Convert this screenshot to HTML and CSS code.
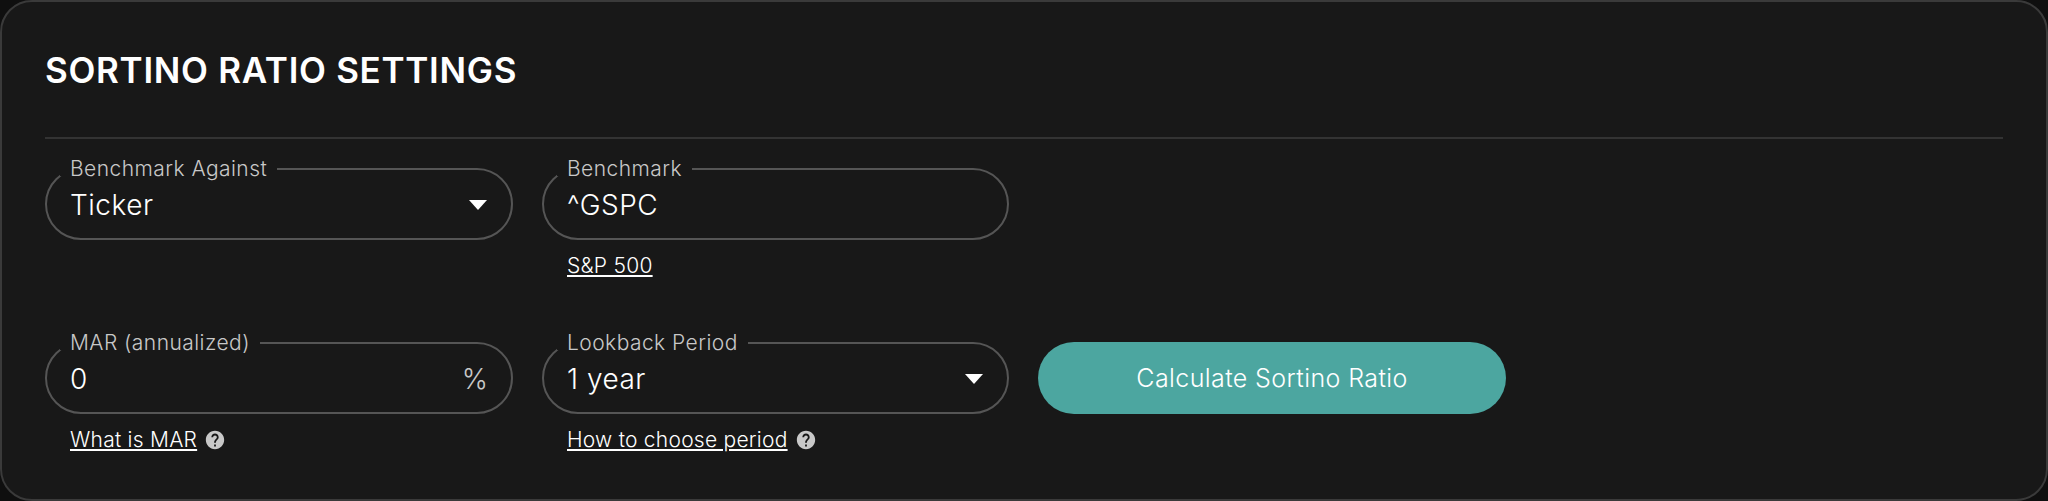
FILE: index.html
```html
<!DOCTYPE html>
<html lang="en">
<head>
    <meta charset="UTF-8">
    <meta name="viewport" content="width=device-width, initial-scale=1.0">
    <title>Sortino Ratio Settings</title>
    <link rel="stylesheet" href="styles.css">
</head>
<body>
    <div class="card">
        <h2>SORTINO RATIO SETTINGS</h2>
        <hr class="divider">
        <form class="settings-form">
            <div class="form-group">
                <fieldset class="field">
                    <legend>Benchmark Against</legend>
                    <span class="value">Ticker</span>
                    <svg class="arrow" viewBox="0 0 18 10"><path d="M0 0h18L9 10z"/></svg>
                </fieldset>
            </div>
            <div class="form-group">
                <fieldset class="field">
                    <legend>Benchmark</legend>
                    <span class="value">^GSPC</span>
                </fieldset>
                <div class="helper"><a href="#">S&amp;P 500</a></div>
            </div>
            <div class="form-group spacer"></div>
            <div class="form-group">
                <fieldset class="field">
                    <legend>MAR (annualized)</legend>
                    <span class="value">0</span>
                    <span class="unit">%</span>
                </fieldset>
                <div class="helper">
                    <a href="#">What is MAR</a>
                    <svg class="help-icon" viewBox="0 0 24 24"><path d="M12 2C6.48 2 2 6.48 2 12s4.48 10 10 10 10-4.48 10-10S17.52 2 12 2zm1 17h-2v-2h2v2zm2.07-7.75l-.9.92C13.45 12.9 13 13.5 13 15h-2v-.5c0-1.1.45-2.1 1.17-2.83l1.24-1.26c.37-.36.59-.86.59-1.41 0-1.1-.9-2-2-2s-2 .9-2 2H8c0-2.21 1.79-4 4-4s4 1.79 4 4c0 .88-.36 1.68-.93 2.25z"/></svg>
                </div>
            </div>
            <div class="form-group">
                <fieldset class="field">
                    <legend>Lookback Period</legend>
                    <span class="value">1 year</span>
                    <svg class="arrow" viewBox="0 0 18 10"><path d="M0 0h18L9 10z"/></svg>
                </fieldset>
                <div class="helper">
                    <a href="#">How to choose period</a>
                    <svg class="help-icon" viewBox="0 0 24 24"><path d="M12 2C6.48 2 2 6.48 2 12s4.48 10 10 10 10-4.48 10-10S17.52 2 12 2zm1 17h-2v-2h2v2zm2.07-7.75l-.9.92C13.45 12.9 13 13.5 13 15h-2v-.5c0-1.1.45-2.1 1.17-2.83l1.24-1.26c.37-.36.59-.86.59-1.41 0-1.1-.9-2-2-2s-2 .9-2 2H8c0-2.21 1.79-4 4-4s4 1.79 4 4c0 .88-.36 1.68-.93 2.25z"/></svg>
                </div>
            </div>
            <div class="form-group">
                <button type="button" class="submit-button">Calculate Sortino Ratio</button>
            </div>
        </form>
    </div>
</body>
</html>
```

FILE: styles.css
```css
body {
    font-family: Inter, "Open Sans", sans-serif;
    background-color: #0f0f0f;
    margin: 0;
    padding: 0;
    color: white;
}
.card {
    box-sizing: border-box;
    height: 501px;
    background-color: #181818;
    border: 2px solid #3a3a3a;
    border-radius: 32px;
    padding: 43px 43px 0;
}
h2 {
    margin: 0;
    font-size: 35px;
    line-height: 50px;
    font-weight: 600;
    letter-spacing: 0.7px;
}
.divider {
    border: none;
    border-top: 2px solid #333;
    margin: 42px 0 0;
}
.settings-form {
    display: grid;
    grid-template-columns: 468px 467px 468px;
    column-gap: 29px;
    grid-template-rows: 174px auto;
    margin-top: 29px;
}
.field {
    box-sizing: border-box;
    height: 78px;
    margin: -6px 0 0;
    padding: 0 23px 4px;
    border: 2px solid #555;
    border-radius: 36px;
    display: flex;
    align-items: center;
    justify-content: space-between;
}
legend {
    margin-left: -10px;
    padding: 0 10px;
    height: 14px;
    line-height: 14px;
    font-size: 21px;
    font-weight: 300;
    letter-spacing: 0.45px;
    color: #c8c8c8;
}
.value {
    font-size: 28px;
    font-weight: 300;
    letter-spacing: 0.5px;
}
.unit {
    font-size: 28px;
    font-weight: 300;
    color: #c8c8c8;
}
.arrow {
    width: 18px;
    height: 10px;
    margin-right: 1px;
    fill: white;
}
.helper {
    display: flex;
    align-items: center;
    gap: 7px;
    margin: 13px 0 0 25px;
    font-size: 21px;
    font-weight: 300;
    letter-spacing: 0.25px;
    line-height: 26px;
}
.helper a {
    color: white;
}
.help-icon {
    width: 22px;
    height: 22px;
    fill: #c8c8c8;
}
.submit-button {
    width: 100%;
    height: 72px;
    background-color: #4ca6a0;
    border: none;
    border-radius: 36px;
    color: white;
    font-family: inherit;
    font-size: 25px;
    font-weight: 300;
    letter-spacing: 0.4px;
    cursor: pointer;
}
```
